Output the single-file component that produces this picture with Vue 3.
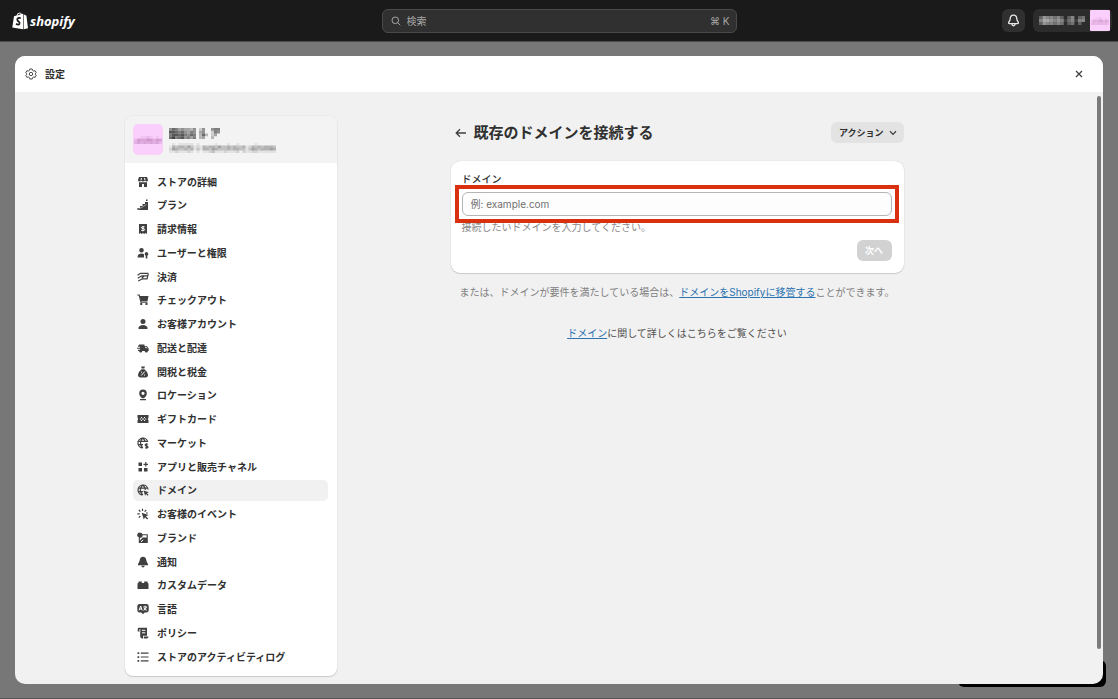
<script setup>
import { ref } from 'vue'

const domain = ref('')
const query = ref('')

const items = [
  { label: 'ストアの詳細', fill: 'M2 1H10L11 4Q11 5.5 9.5 5.5Q8.5 5.5 8 4.6Q7 5.5 6 5.5Q5 5.5 4 4.6Q3.5 5.5 2.5 5.5Q1 5.5 1 4ZM2 6.3H10V11H7V8H5V11H2Z', cut: 'M4.5 2L4 4M7.5 2L8 4' },
  { label: 'プラン', fill: 'M0.5 9H3V7H5.5V5H8V3H11V11H0.5ZM9 0.5H10.5V2H9Z', thin: 'M1.5 10.2L9.5 5.5' },
  { label: '請求情報', fill: 'M2 1H10V11L8.5 10L7.2 11L6 10L4.8 11L3.5 10L2 11Z', cut: 'M7.5 3.8H5.3Q4.4 3.8 4.4 4.7Q4.4 5.5 6 5.5Q7.6 5.5 7.6 6.5Q7.6 7.5 6.5 7.5H4.3M6 3V8.3' },
  { label: 'ユーザーと権限', fill: 'M4.5 1A2.3 2.3 0 1 1 4.5 5.6A2.3 2.3 0 1 1 4.5 1ZM0.5 10.5Q0.5 6.5 4.5 6.5Q6.2 6.5 7 7.3V10.5ZM9.5 5A2 2 0 0 1 10.3 8.7V11.5H8.7V8.7A2 2 0 0 1 9.5 5Z' },
  { label: '決済', stroke: 'M0.5 4.3L3.5 2.3H11.5M4.5 4.9H11.3M0.8 7.2L4.2 5.1H7L4.8 7.2M1.2 10L5.5 7.8H10L11.3 3' },
  { label: 'チェックアウト', fill: 'M2.7 2H11.5L10.5 7H3.8ZM3.2 9H5.2V11H3.2ZM8.5 9H10.5V11H8.5Z', stroke: 'M0.3 1H2.2L4 8.2H10.5' },
  { label: 'お客様アカウント', fill: 'M6 1A2.5 2.5 0 1 1 6 6A2.5 2.5 0 1 1 6 1ZM1.5 11V9.5Q2.5 7 6 7Q9.5 7 10.5 9.5V11Z' },
  { label: '配送と配達', fill: 'M2 2.5H7.5V4H9.8L11.7 6.5V9H10.9A1.6 1.6 0 0 1 7.7 9H5.3A1.6 1.6 0 0 1 2.1 9H1V7.7H3V6.8H0V5.7H3V4.8H1V3.6H2Z', cut: 'M8 5.3H9.2L10 6.4' },
  { label: '関税と税金', fill: 'M4 0.5H8L7.2 2.5H4.8ZM4.5 3.2H7.5Q11 6 11 8.8Q11 11.5 8.5 11.5H3.5Q1 11.5 1 8.8Q1 6 4.5 3.2Z', cut: 'M4.2 9.5L7.8 5.5M4 6.2H5M7 9H8' },
  { label: 'ロケーション', fill: 'M6 0.5A3.8 3.8 0 0 1 9.8 4.3Q9.8 7.5 6.7 9.3H5.3Q2.2 7.5 2.2 4.3A3.8 3.8 0 0 1 6 0.5ZM6 2.7A1.6 1.6 0 1 0 6 5.9A1.6 1.6 0 1 0 6 2.7ZM3 10H9V11.3H3Z' },
  { label: 'ギフトカード', fill: 'M0.5 2H11.5V4.6Q10.2 6 11.5 7.4V10H0.5V7.4Q1.8 6 0.5 4.6Z', cut: 'M4 4L5.5 5.5M8 4L6.5 5.5M4 8L5.5 6.5M8 8L6.5 6.5M2.8 6H4.2M7.8 6H9.2' },
  { label: 'マーケット', stroke: 'M10.8 5A5 5 0 1 0 5.8 11M5.8 1Q3.5 3.3 3.5 6Q3.5 8.8 5.8 11M5.8 1Q8 3 8 5M1 4.3H10M1 7.6H6M10.8 7.2H9.2Q8.2 7.2 8.2 8Q8.2 9 9.5 9Q11 9 11 10Q11 10.8 10 10.8H8.2M9.6 6.2V11.8' },
  { label: 'アプリと販売チャネル', fill: 'M1.5 1.5H5V5H1.5ZM1.5 7H5V10.5H1.5ZM7 7H10.5V10.5H7ZM8.2 1H9.4V2.7H11V3.9H9.4V5.5H8.2V3.9H6.5V2.7H8.2Z' },
  { label: 'ドメイン', active: true, stroke: 'M11 5.5A5 5 0 1 0 5.8 11M5.8 1Q3.3 3.3 3.3 6Q3.3 8.8 5.8 11M5.8 1Q8.3 3 8.3 6M1 4.2H10.6M1 7.6H6', fill: 'M6.5 6.5L11.8 8.2L9.9 9.2L11.5 10.8L10.6 11.7L9 10.1L8.1 11.8Z' },
  { label: 'お客様のイベント', fill: 'M4.7 4.7L11.5 7L8.9 8.2L11.2 10.5L10.2 11.5L8 9.2L6.8 11.5Z', stroke: 'M5.5 0.7V3M1.8 2L3.4 3.6M0.3 5.8H2.7M1.8 9.6L3.4 8M9.2 2L7.6 3.6M10.8 5H9' },
  { label: 'ブランド', fill: 'M3.3 0.8A2.3 2.3 0 0 1 5.5 2.2H10.8V11H1.8V5.2A2.3 2.3 0 0 1 3.3 0.8ZM5.7 3.3A2.6 2.6 0 0 1 2.9 5.8V8.6L5.7 5.6H9.7V3.3Z', cut: 'M3.9 10L6.2 7.8' },
  { label: '通知', fill: 'M6 0.7Q9 0.7 9.3 4.2Q9.5 6 11 8V9.2H1V8Q2.5 6 2.7 4.2Q3 0.7 6 0.7ZM4.3 9.8H7.7Q7.5 11.5 6 11.5Q4.5 11.5 4.3 9.8Z' },
  { label: 'カスタムデータ', fill: 'M0.5 4.5L1.5 3.8V2.5H4.8V4H7.2V2.5H10.5V3.8L11.5 4.5V10H0.5Z' },
  { label: '言語', fill: 'M2.5 1H9.5Q11.7 1 11.7 3.2V7.2Q11.7 9.5 9.5 9.5H7.7L6 11.3L4.3 9.5H2.5Q0.3 9.5 0.3 7.2V3.2Q0.3 1 2.5 1Z', cut: 'M2 7.4L3.7 3L5.2 7.4M2.8 6H4.7M6.3 4H10M8.1 2.7V4M9.4 4Q8.8 6.4 6.5 7.3M7 5Q7.8 6.8 9.8 7.3' },
  { label: 'ポリシー', fill: 'M2 0.8H10V8.8H6V11.4H4.8Q3.2 11.4 3.2 9.6V4.6H0.7V2.2Q0.7 0.8 2 0.8ZM6.8 9.6H11.5Q11.5 11.4 10 11.4H6.8Z', cut: 'M5 3.3H8.3M5 5.8H8.3M2.9 2.2V4.6' },
  { label: 'ストアのアクティビティログ', fill: 'M0.5 1.3H2.2V3H0.5ZM0.5 5.2H2.2V6.9H0.5ZM0.5 9.1H2.2V10.8H0.5Z', stroke: 'M3.8 2.1H11.5M3.8 6H11.5M3.8 9.9H11.5' },
]

// Opacity digits of the mosaic that masks private names, one digit per block.
const masks = {
  name: ['57645443502500566', '88767546504500265', '68878657603730240', '79678564603400300'],
  url: ['01011111010000010001001000001000000', '14344353121434435334343341243434443', '25433434131443543334344331354344454', '11211121010112311121112021122111111'],
  badge: ['001121010', '254465354', '343434342'],
  top: ['3655453035034', '5776565145155', '3655454034030'],
}
</script>

<template>
  <div class="page">
    <header class="topbar">
      <a class="logo" href="#" aria-label="shopify">
        <svg class="bag" viewBox="0 0 16 18" aria-hidden="true">
          <path d="M2 4.3L4.5 3.6Q5.4.7 7.8.5Q9 .4 9.8 2L11 1.7V17.3L.3 15.4Z" fill="#fff" />
          <path d="M11.6 1.9L13.2 3.3L14.4 3.5L16 16.2L11.6 17.2Z" fill="#fff" />
          <path d="M5.5 3.4Q6.3 1.5 7.8 1.2V2.7ZM8.4 1.3Q9 1.5 9.1 2.3L8.4 2.6Z" fill="#1a1a1a" />
          <path d="M8.8 6.2Q5.4 5.3 5.3 7.6Q5.4 9 6.9 9.8Q8 10.6 7.4 12Q6.4 13.3 4 11.8" fill="none" stroke="#1a1a1a" stroke-width="1.7" />
        </svg>
        <span class="word">shopify</span>
      </a>
      <label class="search">
        <svg class="glass" viewBox="0 0 10 10" aria-hidden="true"><circle cx="4.3" cy="4.3" r="3.3" /><path d="M6.8 6.8L9.3 9.3" /></svg>
        <input v-model="query" type="search" placeholder="検索" aria-label="検索" />
        <kbd>⌘ K</kbd>
      </label>
      <div class="tools">
        <button class="bell" type="button" aria-label="通知">
          <svg viewBox="0 0 12 12" aria-hidden="true"><path d="M6 1Q8.8 1 9 4.2Q9 5.8 10.4 7.6Q10.8 8.8 9.8 8.8H2.2Q1.2 8.8 1.6 7.6Q3 5.8 3 4.2Q3.2 1 6 1ZM4.4 9.2Q4.7 11 6 11Q7.3 11 7.6 9.2" /></svg>
        </button>
        <button class="account" type="button" aria-label="アカウント">
          <svg class="mask-top" viewBox="0 0 13 3" preserveAspectRatio="none" aria-hidden="true">
            <template v-for="(row, y) in masks.top" :key="y">
              <rect v-for="(c, x) in row" :key="x" :x="x" :y="y" width="1" height="1" fill="#ddd" :opacity="c / 10" />
            </template>
          </svg>
          <span class="avatar small">
            <svg viewBox="0 0 9 3" preserveAspectRatio="none" aria-hidden="true">
              <template v-for="(row, y) in masks.badge" :key="y">
                <rect v-for="(c, x) in row" :key="x" :x="x" :y="y" width="1" height="1" fill="#a05a9c" :opacity="c / 16" />
              </template>
            </svg>
          </span>
        </button>
      </div>
    </header>

    <div class="backdrop">
      <div class="toast"></div>
      <section class="modal" aria-label="設定">
        <header class="modal-head">
          <svg class="gear" viewBox="0 0 12 12" aria-hidden="true">
            <path d="M4.8 1H7.2L7.6 2.5L8.6 3.1L10.1 2.7L11.3 4.8L10.2 5.8V6.5L11.3 7.3L10.1 9.4L8.6 9L7.6 9.6L7.2 11H4.8L4.4 9.6L3.4 9L1.9 9.4L.7 7.3L1.8 6.4V5.7L.7 4.8L1.9 2.7L3.4 3.1L4.4 2.5Z" />
            <circle cx="6" cy="6" r="1.7" />
          </svg>
          <h1>設定</h1>
          <button class="close" type="button" aria-label="閉じる">
            <svg viewBox="0 0 8 8" aria-hidden="true"><path d="M1 1L7 7M7 1L1 7" /></svg>
          </button>
        </header>
        <div class="modal-body">
          <div class="columns">
            <aside class="side">
              <div class="store">
                <span class="avatar">
                  <svg viewBox="0 0 9 3" preserveAspectRatio="none" aria-hidden="true">
                    <template v-for="(row, y) in masks.badge" :key="y">
                      <rect v-for="(c, x) in row" :key="x" :x="x" :y="y" width="1" height="1" fill="#a05a9c" :opacity="c / 11" />
                    </template>
                  </svg>
                </span>
                <span class="store-text">
                  <svg class="mask-name" viewBox="0 0 17 4" preserveAspectRatio="none" aria-hidden="true">
                    <template v-for="(row, y) in masks.name" :key="y">
                      <rect v-for="(c, x) in row" :key="x" :x="x" :y="y" width="1" height="1" fill="#303030" :opacity="c / 10" />
                    </template>
                  </svg>
                  <svg class="mask-url" viewBox="0 0 35 4" preserveAspectRatio="none" aria-hidden="true">
                    <template v-for="(row, y) in masks.url" :key="y">
                      <rect v-for="(c, x) in row" :key="x" :x="x" :y="y" width="1" height="1" fill="#404040" :opacity="c / 11" />
                    </template>
                  </svg>
                </span>
              </div>
              <nav class="menu" aria-label="設定">
                <a v-for="item in items" :key="item.label" href="#" :class="{ active: item.active }" :aria-current="item.active ? 'page' : null">
                  <svg viewBox="0 0 12 12" aria-hidden="true">
                    <path v-if="item.fill" class="solid" :d="item.fill" />
                    <path v-if="item.stroke" class="line" :d="item.stroke" />
                    <path v-if="item.cut" class="cut" :d="item.cut" />
                    <path v-if="item.thin" class="cut thin" :d="item.thin" />
                  </svg>
                  <span>{{ item.label }}</span>
                </a>
              </nav>
            </aside>

            <main class="main">
              <div class="title-row">
                <a class="back" href="#" aria-label="戻る">
                  <svg viewBox="0 0 12 10" aria-hidden="true"><path d="M11 5H1.5M5 1.2L1.2 5L5 8.8" /></svg>
                </a>
                <h2>既存のドメインを接続する</h2>
                <button class="action" type="button">
                  アクション
                  <svg viewBox="0 0 8 6" aria-hidden="true"><path d="M1 1.2L4 4.4L7 1.2" /></svg>
                </button>
              </div>
              <form class="card" @submit.prevent>
                <label for="domain">ドメイン</label>
                <div class="field">
                  <input id="domain" v-model="domain" type="text" placeholder="例: example.com" aria-describedby="hint" />
                </div>
                <p id="hint">接続したいドメインを入力してください。</p>
                <button class="next" type="submit" disabled>次へ</button>
              </form>
              <p class="alt">または、ドメインが要件を満たしている場合は、<a href="#">ドメインをShopifyに移管する</a>ことができます。</p>
              <p class="learn"><a href="#">ドメイン</a>に関して詳しくはこちらをご覧ください</p>
            </main>
          </div>
          <div class="scroll"></div>
        </div>
      </section>
    </div>
  </div>
</template>

<style>
body {
  margin: 0;
  background: #777;
}
</style>

<style scoped>
* {
  box-sizing: border-box;
}
.page {
  height: 100vh;
  display: flex;
  flex-direction: column;
  font-family: Inter, "Noto Sans CJK JP", sans-serif;
  font-size: 10px;
  line-height: 16px;
  color: #303030;
}
button,
input,
kbd {
  font: inherit;
  color: inherit;
}
button {
  border: 0;
  padding: 0;
}
h1,
h2,
p {
  margin: 0;
}
.topbar {
  flex: none;
  height: 42px;
  padding: 0 6px;
  display: grid;
  grid-template-columns: 1fr 355px 1fr;
  align-items: center;
  background: #1a1a1a;
  border-bottom: 1px solid #4a4a4a;
}
.logo {
  padding-left: 6px;
  display: flex;
  align-items: center;
  gap: 2px;
  color: #fff;
  text-decoration: none;
}
.bag {
  width: 16px;
  height: 18px;
}
.word {
  font-family: "Open Sans", sans-serif;
  font-size: 13px;
  font-weight: 700;
  font-style: italic;
}
.search {
  height: 24px;
  padding: 0 6px 0 8px;
  display: flex;
  align-items: center;
  gap: 6px;
  background: #303030;
  border: 1px solid #4a4a4a;
  border-radius: 6px;
  color: #a8a8a8;
}
.glass {
  width: 10px;
  height: 10px;
  fill: none;
  stroke: #a8a8a8;
}
.search input {
  flex: 1;
  min-width: 0;
  padding: 0;
  border: 0;
  outline: 0;
  background: none;
}
.search input::placeholder {
  color: #a8a8a8;
}
.tools {
  display: flex;
  justify-content: flex-end;
  gap: 8px;
}
.bell {
  width: 23px;
  height: 23px;
  display: grid;
  place-items: center;
  background: #303030;
  border-radius: 6px;
}
.bell svg {
  width: 13px;
  height: 13px;
  fill: none;
  stroke: #e8e8e8;
  stroke-width: 1.2;
}
.account {
  width: 79px;
  height: 23px;
  padding: 0 2px 0 6px;
  display: flex;
  align-items: center;
  justify-content: space-between;
  background: #2c2c2c;
  border-radius: 6px;
}
.mask-top {
  width: 46px;
  height: 9px;
}
.avatar {
  flex: none;
  width: 30px;
  height: 31px;
  display: grid;
  place-items: center;
  background: #fbcffb;
  border-radius: 5px;
}
.avatar svg {
  width: 28px;
  height: 8px;
}
.avatar.small {
  width: 20px;
  height: 21px;
  border-radius: 1px;
}
.avatar.small svg {
  width: 18px;
  height: 8px;
}
.backdrop {
  flex: 1;
  min-height: 0;
  padding: 14px 15px;
  position: relative;
  background: #777;
  border-bottom: 1px solid #555;
}
.toast {
  position: absolute;
  right: 12px;
  bottom: 11px;
  width: 148px;
  height: 27px;
  background: #000;
  border-radius: 6px;
}
.modal {
  position: relative;
  height: 100%;
  display: flex;
  flex-direction: column;
  overflow: hidden;
  background: #f1f1f1;
  border-radius: 10px;
}
.modal-head {
  flex: none;
  height: 36px;
  padding: 0 18px 0 10px;
  display: flex;
  align-items: center;
  gap: 8px;
  background: #fff;
}
.gear {
  width: 12px;
  height: 12px;
  fill: none;
  stroke: #4a4a4a;
}
h1 {
  font-size: 10px;
  line-height: 16px;
  font-weight: 600;
}
.close {
  margin-left: auto;
  width: 12px;
  height: 12px;
  display: grid;
  place-items: center;
  background: none;
}
.close svg {
  width: 8px;
  height: 8px;
  fill: none;
  stroke: #404040;
  stroke-width: 1.3;
}
.modal-body {
  flex: 1;
  min-height: 0;
  padding: 24px 16px 8px;
  position: relative;
}
.scroll {
  position: absolute;
  top: 4px;
  right: 2px;
  bottom: 35px;
  width: 4px;
  background: #7b7b7b;
  border-radius: 2px;
}
.columns {
  max-width: 868px;
  height: 100%;
  margin: 0 auto;
  display: grid;
  grid-template-columns: 212px 1fr;
  gap: 24px;
}
.side {
  display: flex;
  flex-direction: column;
  overflow: hidden;
  background: #fff;
  border-radius: 8px;
  box-shadow: 0 0 1px #bbb, 0 1px 1px #ccc;
}
.store {
  flex: none;
  height: 47px;
  padding: 0 8px;
  display: flex;
  align-items: center;
  gap: 6px;
  background: #f3f3f3;
}
.store-text {
  padding-top: 2px;
  display: flex;
  flex-direction: column;
  gap: 4px;
}
.mask-name {
  width: 51px;
  height: 11px;
}
.mask-url {
  width: 107px;
  height: 10px;
}
.menu {
  flex: 1;
  padding: 8px 9px 9px 8px;
  display: flex;
  flex-direction: column;
  justify-content: space-between;
}
.menu a {
  height: 21px;
  padding: 0 4px;
  display: flex;
  align-items: center;
  gap: 8px;
  border-radius: 5px;
  color: #303030;
  font-weight: 600;
  text-decoration: none;
}
.menu a.active {
  background: #f1f1f1;
}
.menu svg {
  width: 12px;
  height: 12px;
}
.solid {
  fill: #404040;
  fill-rule: evenodd;
}
.line {
  fill: none;
  stroke: #404040;
  stroke-width: 1.2;
}
.cut {
  fill: none;
  stroke: #fff;
}
.thin {
  stroke-width: 0.5;
}
.main {
  width: 100%;
  max-width: 453px;
  margin: 0 auto;
  padding-top: 6px;
}
.title-row {
  height: 21px;
  margin-bottom: 18px;
  padding-left: 4px;
  display: flex;
  align-items: center;
  gap: 7px;
}
.back,
.back svg {
  display: block;
  width: 12px;
  height: 10px;
}
.back svg,
.action svg {
  fill: none;
  stroke: #404040;
  stroke-width: 1.3;
}
h2 {
  font-size: 15px;
  line-height: 21px;
  font-weight: 600;
}
.action {
  height: 21px;
  margin-left: auto;
  padding: 0 7px 0 8px;
  display: flex;
  align-items: center;
  gap: 5px;
  background: #e3e3e3;
  border-radius: 6px;
  font-size: 9px;
  font-weight: 600;
}
.action svg {
  width: 8px;
  height: 6px;
}
.card {
  padding: 10px 12px 12px 11px;
  display: flex;
  flex-direction: column;
  background: #fff;
  border-radius: 9px;
  box-shadow: 0 0 1px #bbb, 0 1px 1px #ccc;
}
.card label {
  margin-bottom: -2px;
  font-weight: 500;
}
.field {
  position: relative;
  margin: 0 -7px;
  padding: 3px;
  border: 4px solid #d9300f;
}
.field input {
  display: block;
  width: 100%;
  height: 24px;
  padding: 0 8px;
  border: 1px solid #b5b5b5;
  border-radius: 6px;
  background: #fdfdfd;
}
.field input::placeholder {
  color: #707070;
  opacity: 1;
}
#hint {
  margin-top: -4px;
  color: #8a8a8a;
}
.next {
  align-self: flex-end;
  width: 35px;
  height: 21px;
  margin-top: 5px;
  background: #d2d2d2;
  border-radius: 6px;
  color: #fff;
  font-size: 9px;
  font-weight: 600;
}
.alt {
  margin-top: 11px;
  text-align: center;
  color: #808080;
}
.learn {
  margin-top: 25px;
  text-align: center;
  color: #505050;
}
.main p a {
  color: #2c73b0;
}
</style>
